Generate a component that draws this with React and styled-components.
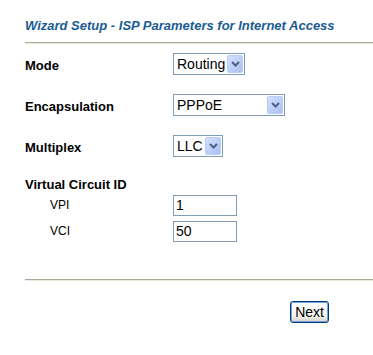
import React from "react";
import styled, { createGlobalStyle } from "styled-components";

const GlobalStyle = createGlobalStyle`
  html, body {
    margin: 0;
    padding: 0;
    background: #ffffff;
    font-family: "Liberation Sans", Arial, sans-serif;
  }
`;

const Select = ({ width, value, options }) => {
  return (
    <SelectBox width={width}>
      <NativeSelect defaultValue={value}>
        {options.map((o) => (
          <option key={o}>{o}</option>
        ))}
      </NativeSelect>
      <ArrowButton>
        <svg width="9" height="6" viewBox="0 0 9 6">
          <path
            d="M1 1 L4.5 4.5 L8 1"
            fill="none"
            stroke="#4d6185"
            strokeWidth="2"
          />
        </svg>
      </ArrowButton>
    </SelectBox>
  );
};

const App = () => {
  return (
    <Page>
      <GlobalStyle />
      <Title>Wizard Setup - ISP Parameters for Internet Access</Title>
      <Rule />
      <Form>
        <Row>
          <Label>Mode</Label>
          <Select width={72} value="Routing" options={["Routing", "Bridging"]} />
        </Row>
        <Row>
          <Label>Encapsulation</Label>
          <Select width={112} value="PPPoE" options={["PPPoE", "PPPoA", "RFC 1483", "ENET ENCAP"]} />
        </Row>
        <Row>
          <Label>Multiplex</Label>
          <Select width={50} value="LLC" options={["LLC", "VC"]} />
        </Row>
        <Group>
          <GroupLabel>Virtual Circuit ID</GroupLabel>
          <SubRow>
            <SubLabel>VPI</SubLabel>
            <TextInput defaultValue="1" />
          </SubRow>
          <SubRow>
            <SubLabel>VCI</SubLabel>
            <TextInput defaultValue="50" />
          </SubRow>
        </Group>
      </Form>
      <Rule bottom />
      <ButtonBar>
        <NextButton>Next</NextButton>
      </ButtonBar>
    </Page>
  );
};

export default App;

const Page = styled.div`
  width: 373px;
  height: 355px;
  padding-left: 25px;
  box-sizing: border-box;
  overflow: hidden;
`;

const Title = styled.h1`
  margin: 0;
  padding-top: 18px;
  height: 16px;
  font-size: 13px;
  line-height: 16px;
  font-weight: bold;
  font-style: italic;
  color: #1a5c92;
  white-space: nowrap;
`;

const Rule = styled.div`
  margin-top: ${({ bottom }) => (bottom ? "33px" : "8px")};
  height: 1px;
  border-top: 1px solid #aca899;
  background: #ece9d8;
`;

const Form = styled.div`
  display: flex;
  flex-direction: column;
  padding-top: 9px;
`;

const Row = styled.div`
  display: grid;
  grid-template-columns: 148px auto;
  align-items: center;
  height: 22px;
  margin-bottom: 19px;
`;

const Group = styled.div`
  display: flex;
  flex-direction: column;
  padding-top: 1px;
`;

const Label = styled.div`
  font-size: 13px;
  font-weight: bold;
  color: #000000;
  line-height: 16px;
  padding-top: 3px;
`;

const GroupLabel = styled(Label)`
  padding-top: 0;
  margin-bottom: 1px;
`;

const SubRow = styled.div`
  display: grid;
  grid-template-columns: 148px auto;
  align-items: center;
  margin-bottom: 4px;
  height: 22px;
`;

const SubLabel = styled.div`
  font-size: 12px;
  color: #000000;
  padding-left: 25px;
`;

const SelectBox = styled.div`
  position: relative;
  width: ${({ width }) => width}px;
  height: 22px;
  box-sizing: border-box;
  border: 1px solid #7f9db9;
  background: #ffffff;
`;

const NativeSelect = styled.select`
  appearance: none;
  -webkit-appearance: none;
  border: none;
  outline: none;
  background: transparent;
  width: 100%;
  height: 100%;
  margin: 0;
  padding: 0 0 0 3px;
  font-family: "Liberation Sans", Arial, sans-serif;
  font-size: 14px;
  color: #000000;
`;

const ArrowButton = styled.div`
  position: absolute;
  top: 1px;
  right: 1px;
  width: 16px;
  height: 18px;
  box-sizing: border-box;
  border: 1px solid #b9cdf7;
  border-radius: 2px;
  background: linear-gradient(135deg, #d4e1fc 0%, #b9cdf8 60%, #aac0f2 100%);
  display: flex;
  align-items: center;
  justify-content: center;
  pointer-events: none;
`;

const TextInput = styled.input`
  width: 64px;
  height: 21px;
  box-sizing: border-box;
  border: 1px solid #7f9db9;
  margin: 0;
  padding: 0 2px;
  font-family: "Liberation Sans", Arial, sans-serif;
  font-size: 14px;
  color: #000000;
  outline: none;
`;

const ButtonBar = styled.div`
  display: flex;
  justify-content: flex-end;
  padding-top: 20px;
  padding-right: 44px;
`;

const NextButton = styled.button`
  height: 22px;
  padding: 0 4px;
  box-sizing: border-box;
  border: 1px solid #003c74;
  border-radius: 3px;
  background: linear-gradient(#ffffff 0%, #f3f3ef 70%, #d6d0c5 100%);
  box-shadow: inset 0 0 0 1px #7ca1e0;
  font-family: "Liberation Sans", Arial, sans-serif;
  font-size: 14px;
  color: #000000;
  cursor: pointer;
`;
